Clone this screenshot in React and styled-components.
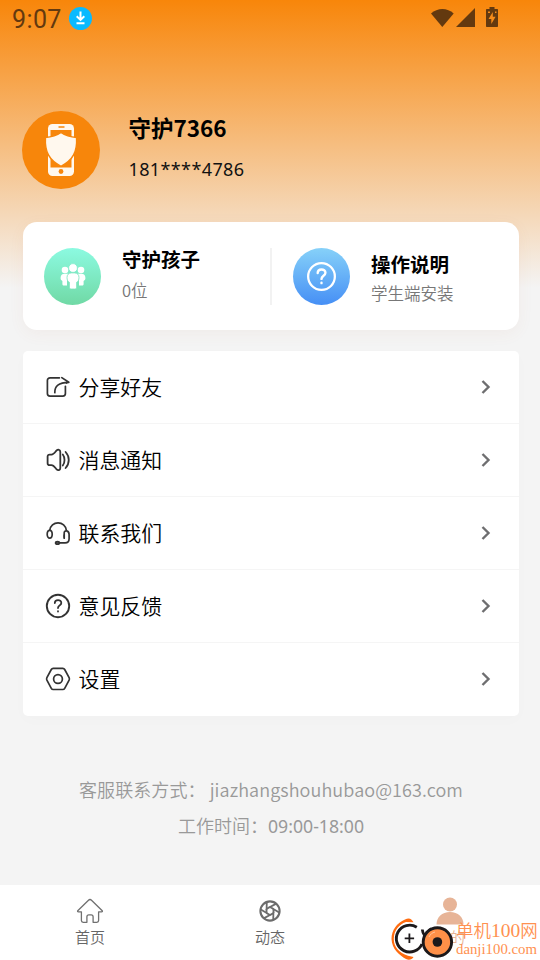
import React from 'react';
import styled, { createGlobalStyle } from 'styled-components';

const GlobalStyle = createGlobalStyle`
  * {
    box-sizing: border-box;
  }
  body {
    margin: 0;
    background: #f4f4f4;
    font-family: 'Noto Sans CJK SC', 'Noto Sans', sans-serif;
  }
`;

const ShareIcon = () => (
  <Glyph viewBox="0 0 26 26" $size={26}>
    <path d="M14.400 3.800H5a2.600 2.600 0 0 0-2.600 2.600v13.100A2.600 2.600 0 0 0 5 22.100h12.800a2.600 2.600 0 0 0 2.600-2.600v-7.200" />
    <path d="M9.800 18.700C9.600 12 13.500 8.500 23.800 8.300M16.800 3.600l7 4.700-2.400.9" />
  </Glyph>
);

const SoundIcon = () => (
  <Glyph viewBox="0 0 26 26" $size={26} strokeWidth="1.800">
    <path d="M2.600 9.500c0-1.200.7-1.900 2-1.900h1.900c2 0 3.300-2 4.900-3.900 1.600-1.700 3.900-1.200 3.900 1.200v16c0 2.400-2.300 2.900-3.900 1.200-1.600-1.900-2.900-3.900-4.900-3.900H4.600c-1.300 0-2-.7-2-1.900z" />
    <path d="M17.800 7.500c2.300 3 2.300 8 0 11M20.600 5c4.200 4.600 4.200 11.400 0 16" />
  </Glyph>
);

const HeadsetIcon = () => (
  <Glyph viewBox="0 0 26 26" $size={26}>
    <path d="M4.800 10.200a8.300 8.300 0 0 1 16.500 0" />
    <ellipse cx="4.700" cy="14.300" rx="2.500" ry="3.900" />
    <path d="M19.200 18.200v-5.400c0-3 4.900-2.600 4.900 1.700v4.300c0 2.800-1.400 4.100-4 4.100h-5.600M19 14.500v3" />
    <ellipse cx="12.500" cy="22.900" rx="1.900" ry="1.300" fill="#777" />
  </Glyph>
);

const QuestionIcon = ({ size = 26, thick = 1.9, mark = 1.8 }) => (
  <Glyph viewBox="0 0 26 26" $size={size} strokeWidth={thick}>
    <circle cx="13" cy="13" r="11.200" />
    <path d="M9.800 10.100c0-4 6.500-4 6.500-.2 0 2.500-3.300 2.500-3.300 5.100M13 18.200v.4" strokeWidth={mark} />
  </Glyph>
);

const SettingIcon = () => (
  <Glyph viewBox="0 0 26 26" $size={26} strokeWidth="1.700">
    <path d="M8.200 2.400h9.600c.9 0 1.500.4 1.900 1.100l4.400 8.200c.4.800.4 1.700 0 2.500l-4.400 8.200c-.4.700-1 1.100-1.900 1.100H8.200c-.9 0-1.500-.4-1.900-1.100l-4.400-8.200c-.4-.8-.4-1.700 0-2.500l4.400-8.200c.4-.7 1-1.100 1.900-1.100z" />
    <circle cx="13" cy="13" r="4.400" />
  </Glyph>
);

const PeopleIcon = () => (
  <svg width="26" height="26" viewBox="0 0 26 26" fill="#fff">
    <circle cx="5" cy="7" r="3.300" />
    <circle cx="21" cy="7" r="3.300" />
    <path d="M4.500 10.800h4c-1 1.500-1.500 3.400-1.500 7.500v4.300H4c-1 0-1.600-.6-1.600-1.600v-3.100C1 17.300.5 16.300.6 14.800c.1-2.700 1.500-4 3.900-4zM21.500 10.800h-4c1 1.500 1.500 3.400 1.500 7.500v4.300h3c1 0 1.600-.6 1.600-1.600v-3.100c1.400-.6 1.900-1.600 1.800-3.100-.1-2.700-1.500-4-3.900-4z" />
    <circle cx="13" cy="5" r="4.400" stroke="#82eccb" strokeWidth=".8" />
    <path d="M11.500 9.900h3c3 0 4.500 1.800 4.500 4.700 0 2.200-.7 3.900-2.400 4.700v4.900c0 1.200-.7 1.800-1.900 1.800h-3.400c-1.200 0-1.900-.6-1.900-1.800v-4.900C7.700 18.500 7 16.800 7 14.600c0-2.900 1.500-4.700 4.500-4.700z" stroke="#7ce3be" strokeWidth=".8" />
  </svg>
);

const PhoneShield = () => (
  <svg width="78" height="78" viewBox="0 0 78 78">
    <rect x="26" y="13" width="26" height="52" rx="4.500" fill="#fff8ee" />
    <path d="M28.500 19h21v37.500h-21z" fill="#f7860b" />
    <path d="M37 16h5" stroke="#f7860b" strokeWidth="1.400" strokeLinecap="round" />
    <circle cx="39" cy="60.500" r="2.400" fill="#f7860b" />
    <path
      d="M39 21.500c4.800 3.400 9.800 4.500 15.600 4.900.8 14.500-3.600 22.600-15.600 29-12-6.400-16.400-14.500-15.600-29C29.200 26 34.200 24.900 39 21.500z"
      fill="#fff8ee"
      stroke="#f7860b"
      strokeWidth="1.500"
    />
  </svg>
);

const DownloadBadge = () => (
  <svg width="23" height="23" viewBox="0 0 23 23">
    <circle cx="11.500" cy="11.500" r="11.500" fill="#08baff" />
    <path d="M11.500 4.500v8.500M7.700 9.300l3.800 3.600 3.800-3.600M7.500 16.200h8" fill="none" stroke="#fff" strokeWidth="2" />
  </svg>
);

const StatusIcons = () => (
  <svg width="70" height="22" viewBox="0 0 70 22" fill="#63390f">
    <path d="M1 6.500c6.500-6 16.300-6 22.700 0L12.300 20z" />
    <path d="M45 1v19H26z" />
    <path d="M59.500 0h5v2H67c.7 0 1 .4 1 1v16c0 .7-.4 1-1 1H57c-.7 0-1-.4-1-1V3c0-.6.3-1 1-1h2.500z" />
    <path d="M62.800 5l-4.300 7h2.800v5l4.300-7.300h-2.800zM58 4.500h2v1.500h-2zM65 4.500h1.500v1.500H65z" fill="#f68c1a" />
  </svg>
);

const HomeIcon = () => (
  <svg width="28" height="26" viewBox="0 0 28 26" fill="none" stroke="#707070" strokeWidth="1.300" strokeLinejoin="round">
    <path d="M14 1.500c-.6 0-1 .2-1.500.7L2 12.500c-.8.8-.5 1.300.5 1.300h2.900v8.700c0 1.200.6 1.800 1.800 1.800h3.700v-5.500c0-1.300.8-2 2-2h2.200c1.200 0 2 .7 2 2v5.500h3.700c1.200 0 1.800-.6 1.800-1.800v-8.700h2.900c1 0 1.300-.5.5-1.300L15.500 2.200c-.5-.5-.9-.7-1.500-.7z" />
  </svg>
);

const ApertureIcon = () => (
  <svg width="22" height="22" viewBox="0 0 22 22" fill="none" stroke="#6c6c6c" strokeWidth="1.800">
    <circle cx="11" cy="11" r="9.600" strokeWidth="2.100" />
    {[0, 60, 120, 180, 240, 300].map((angle) => (
      <path key={angle} d="M7.800 1.800l-.2 7.200L11 7" transform={`rotate(${angle} 11 11)`} />
    ))}
  </svg>
);

const PersonIcon = () => (
  <svg width="28" height="28" viewBox="0 0 28 28" fill="#e7b497">
    <circle cx="14" cy="7.500" r="7" />
    <path d="M.5 27.500c0-7.500 5.500-12.500 13.500-12.500s13.500 5 13.500 12.500z" />
  </svg>
);

const SiteLogo = () => (
  <svg width="66" height="44" viewBox="0 0 66 44" fill="none">
    <circle cx="18.300" cy="21.300" r="14" fill="#fff" />
    <path d="M22.500 5.300C20.500 1.500 18 .5 14 2.500 6 6 .5 13 .5 22 1 32 8 38 15 42c3 1.500 6 .5 7.500-2l-5.500-1.300C8 36 2.800 30 2.800 22 2.800 13.500 8 7.500 15 5z" fill="#ff6c10" />
    <path d="M25.800 10.200A13.400 13.400 0 1 0 31 27" stroke="#1c191b" strokeWidth="2.900" />
    <path d="M13.700 21.300h9.400M18.400 16.600V26" stroke="#1c191b" strokeWidth="1.800" />
    <path d="M31.300 12.500c.2 2.500.8 4.300 2.300 6M35 16l5.500-4.500" stroke="#1c191b" strokeWidth="2.800" />
    <circle cx="46.400" cy="25" r="14.200" fill="#ff9048" stroke="#1c191b" strokeWidth="2.900" />
    <circle cx="46.400" cy="25" r="4.800" fill="#1c191b" />
    <path d="M38 20c1.300-2.800 3.200-4.300 6-5" stroke="#ffc49c" strokeWidth="1" />
  </svg>
);

const Chevron = () => (
  <svg width="10" height="14" viewBox="0 0 10 14" fill="none" stroke="#6e6e70" strokeWidth="2.400">
    <path d="M1.500 1l6 6-6 6" />
  </svg>
);

const menu = [
  { label: '分享好友', icon: <ShareIcon /> },
  { label: '消息通知', icon: <SoundIcon /> },
  { label: '联系我们', icon: <HeadsetIcon /> },
  { label: '意见反馈', icon: <QuestionIcon /> },
  { label: '设置', icon: <SettingIcon /> },
];

const App = () => {
  return (
    <Screen>
      <GlobalStyle />
      <StatusBar>
        <Clock>9:07</Clock>
        <DownloadBadge />
        <StatusRight>
          <StatusIcons />
        </StatusRight>
      </StatusBar>

      <Profile>
        <Avatar>
          <PhoneShield />
        </Avatar>
        <ProfileText>
          <Name>守护7366</Name>
          <Phone>181****4786</Phone>
        </ProfileText>
      </Profile>

      <StatsCard>
        <Stat>
          <StatIcon $from="#8cfae1" $to="#70d9a5">
            <PeopleIcon />
          </StatIcon>
          <StatText>
            <StatTitle>守护孩子</StatTitle>
            <StatNote $gap={4}>0位</StatNote>
          </StatText>
        </Stat>
        <Divider />
        <Stat>
          <StatIcon $from="#86d1f9" $to="#468ff5" $stroke="#fff">
            <QuestionIcon size={31} thick={1.9} mark={2} />
          </StatIcon>
          <StatText $top={5}>
            <StatTitle>操作说明</StatTitle>
            <StatNote $gap={2}>学生端安装</StatNote>
          </StatText>
        </Stat>
      </StatsCard>

      <MenuCard>
        {menu.map((item) => (
          <MenuRow key={item.label}>
            {item.icon}
            <MenuLabel>{item.label}</MenuLabel>
            <Chevron />
          </MenuRow>
        ))}
      </MenuCard>

      <Contact>
        <ContactLine $spacing={0.08}>客服联系方式： jiazhangshouhubao@163.com</ContactLine>
        <ContactLine>工作时间：<Hours>09:00-18:00</Hours></ContactLine>
      </Contact>

      <TabBar>
        <Tab>
          <HomeIcon />
          <TabLabel>首页</TabLabel>
        </Tab>
        <Tab>
          <ApertureIcon />
          <TabLabel>动态</TabLabel>
        </Tab>
        <Tab>
          <PersonIcon />
          <TabLabel $active>我的</TabLabel>
        </Tab>
        <SiteMark>
          <SiteLogo />
          <SiteText>
            <SiteName>单机<SiteNumber>100</SiteNumber>网</SiteName>
            <SiteUrl>danji100.com</SiteUrl>
          </SiteText>
        </SiteMark>
      </TabBar>
    </Screen>
  );
};

export default App;

const Screen = styled.div`
  width: 540px;
  height: 960px;
  display: flex;
  flex-direction: column;
  overflow: hidden;
  background: linear-gradient(#f8860a, #f4f4f4 288px);
`;

const StatusBar = styled.div`
  height: 38px;
  display: flex;
  align-items: center;
  padding: 0 40px 1px 12px;
`;

const Clock = styled.span`
  width: 57px;
  padding-top: 2px;
  font-family: Roboto, sans-serif;
  font-size: 25px;
  letter-spacing: 0.4px;
  color: #63390f;
`;

const StatusRight = styled.div`
  display: flex;
  margin-left: auto;
  margin-bottom: 2px;
`;

const Profile = styled.div`
  display: flex;
  padding: 73px 22px 0;
  height: 184px;
`;

const Avatar = styled.div`
  width: 78px;
  height: 78px;
  border-radius: 50%;
  background: #f7860b;
`;

const ProfileText = styled.div`
  margin-left: 28.5px;
`;

const Name = styled.div`
  margin-top: -1px;
  font-size: 22.5px;
  line-height: 34px;
  font-weight: 700;
  color: #000;
`;

const Phone = styled.div`
  margin-top: 12px;
  font-family: 'Noto Sans', sans-serif;
  font-size: 18px;
  line-height: 26px;
  letter-spacing: 0.38px;
  color: #111;
`;

const StatsCard = styled.div`
  display: flex;
  align-items: center;
  width: 496px;
  height: 108px;
  margin: 0 auto 21px 23px;
  padding-left: 21px;
  border-radius: 14px;
  background: #fff;
  box-shadow: 0 4px 16px rgba(180, 110, 60, 0.06);
`;

const Stat = styled.div`
  display: flex;
  width: 226px;
  height: 57px;
`;

const StatIcon = styled.div`
  display: flex;
  align-items: center;
  justify-content: center;
  width: 57px;
  height: 57px;
  border-radius: 50%;
  background: linear-gradient(${(props) => props.$from}, ${(props) => props.$to});

  svg {
    stroke: ${(props) => props.$stroke || 'none'};
  }
`;

const StatText = styled.div`
  margin: -1px 0 0 21px;
  padding-top: ${(props) => props.$top || 0}px;
`;

const StatTitle = styled.div`
  font-size: 19.5px;
  line-height: 24px;
  font-weight: 700;
  color: #000;
`;

const StatNote = styled.div`
  margin-top: ${(props) => props.$gap}px;
  font-size: 16.5px;
  line-height: 30px;
  font-weight: 350;
  color: #777;
`;

const Divider = styled.div`
  width: 2px;
  height: 57px;
  margin-right: 21px;
  background: #f2f2f2;
`;

const MenuCard = styled.div`
  width: 496px;
  margin-left: 23px;
  border-radius: 5px;
  background: #fff;
  box-shadow: 0 4px 16px rgba(0, 0, 0, 0.015);
`;

const MenuRow = styled.div`
  display: flex;
  align-items: center;
  height: 73px;
  padding: 0 28.5px 0 22px;
  border-bottom: 1px solid #f5f5f5;

  &:last-child {
    border-bottom-color: transparent;
  }
`;

const Glyph = styled.svg`
  width: ${(props) => props.$size}px;
  height: ${(props) => props.$size}px;
  flex: none;
  fill: none;
  stroke: #333;
  stroke-linecap: round;
  stroke-linejoin: round;
  stroke-width: ${(props) => props.strokeWidth || 1.7};
`;

const MenuLabel = styled.span`
  flex: 1;
  margin-left: 7.5px;
  padding-bottom: 2px;
  font-size: 20.9px;
  line-height: 30px;
  font-weight: 350;
  color: #000;
`;

const Contact = styled.div`
  margin-top: 55px;
  padding-left: 2px;
  text-align: center;
`;

const ContactLine = styled.div`
  font-size: 18px;
  line-height: 36px;
  font-weight: 350;
  letter-spacing: ${(props) => props.$spacing || 0}px;
  white-space: pre;
  color: #999;
`;

const Hours = styled.span`
  font-family: 'Noto Sans', sans-serif;
  font-size: 17.7px;
  font-weight: 400;
`;

const TabBar = styled.div`
  position: relative;
  display: flex;
  height: 75px;
  margin-top: auto;
  background: #fff;
`;

const Tab = styled.div`
  flex: 1;
  display: flex;
  flex-direction: column;
  align-items: center;

  > svg {
    height: 28px;
    margin: 12px 1px 0 0;
  }
`;

const TabLabel = styled.span`
  font-size: 15px;
  line-height: 23px;
  font-weight: 350;
  color: ${(props) => (props.$active ? '#e7b497' : '#666')};
`;

const SiteMark = styled.div`
  position: absolute;
  left: 391px;
  top: 32px;
  display: flex;
`;

const SiteText = styled.div`
  padding-top: 1px;
  margin-left: -1px;
  color: #ff9150;
  white-space: nowrap;
`;

const SiteName = styled.div`
  font-family: 'Noto Sans CJK SC', sans-serif;
  font-size: 17.5px;
  line-height: 24px;
  font-weight: 350;
`;

const SiteNumber = styled.span`
  font-family: 'Liberation Serif', serif;
  font-size: 19.5px;
`;

const SiteUrl = styled.div`
  margin-top: -2px;
  font-family: 'Liberation Serif', serif;
  font-size: 14.8px;
  line-height: 16px;
`;
